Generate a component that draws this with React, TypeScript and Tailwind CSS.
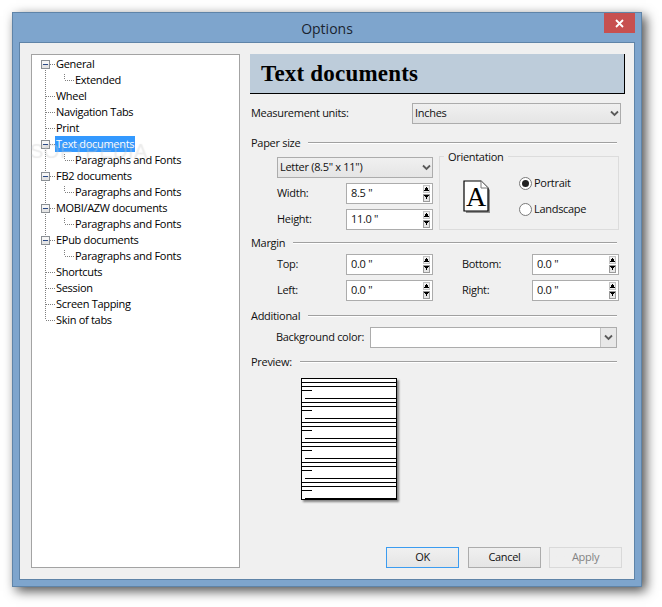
import React from "react";

type Kind = "exp" | "leaf" | "child" | "last";
const rows: { t: string; k: Kind; sel?: boolean }[] = [
  { t: "General", k: "exp" },
  { t: "Extended", k: "child" },
  { t: "Wheel", k: "leaf" },
  { t: "Navigation Tabs", k: "leaf" },
  { t: "Print", k: "leaf" },
  { t: "Text documents", k: "exp", sel: true },
  { t: "Paragraphs and Fonts", k: "child" },
  { t: "FB2 documents", k: "exp" },
  { t: "Paragraphs and Fonts", k: "child" },
  { t: "MOBI/AZW documents", k: "exp" },
  { t: "Paragraphs and Fonts", k: "child" },
  { t: "EPub documents", k: "exp" },
  { t: "Paragraphs and Fonts", k: "child" },
  { t: "Shortcuts", k: "leaf" },
  { t: "Session", k: "leaf" },
  { t: "Screen Tapping", k: "leaf" },
  { t: "Skin of tabs", k: "last" },
];

function Guide({ k, first }: { k: Kind; first: boolean }) {
  const w = k === "child" ? 42 : 23;
  const dot = { stroke: "#7f7f7f", strokeDasharray: "1 1", shapeRendering: "crispEdges" as const };
  return (
    <svg width={w} height={16} className="shrink-0">
      {!first && <line x1={13.5} y1={0} x2={13.5} y2={k === "last" ? 8 : 16} {...dot} />}
      {first && <line x1={13.5} y1={8} x2={13.5} y2={16} {...dot} />}
      {k !== "child" && <line x1={14} y1={8.5} x2={23} y2={8.5} {...dot} />}
      {k === "child" && (
        <>
          <line x1={32.5} y1={2} x2={32.5} y2={8} {...dot} />
          <line x1={33} y1={8.5} x2={42} y2={8.5} {...dot} />
        </>
      )}
      {k === "exp" && (
        <g shapeRendering="crispEdges">
          <rect x={9.5} y={4.5} width={8} height={8} fill="#e4e4e4" stroke="#8a8f94" />
          <rect x={10} y={5} width={7} height={3} fill="#f6f6f6" />
          <line x1={11} y1={8.5} x2={16} y2={8.5} stroke="#2b4a86" />
        </g>
      )}
    </svg>
  );
}

function Tree() {
  return (
    <div className="w-[209px] h-[514px] bg-white border border-[#a3a3a3] pt-px shrink-0">
      {rows.map((r, i) => (
        <div key={i} className="flex h-4 items-center text-black">
          <Guide k={r.k} first={i === 0} />
          <span className={r.sel ? "px-px h-4 leading-4 bg-[#3399ff] text-white" : "px-px h-4 leading-4"}>{r.t}</span>
        </div>
      ))}
    </div>
  );
}

function Chevron() {
  return (
    <svg width={9} height={7} viewBox="0 0 9 7" className="shrink-0">
      <path d="M1 1.5 L4.5 5 L8 1.5" fill="none" stroke="#5a5a5a" strokeWidth={1.8} />
    </svg>
  );
}

function Select({ text, cls }: { text: string; cls: string }) {
  return (
    <div className={"flex items-center justify-between border border-[#acacac] bg-gradient-to-b from-[#f0f0f0] to-[#e5e5e5] pl-[2px] pr-[1px] " + cls}>
      <span>{text}</span>
      <Chevron />
    </div>
  );
}

function Spin({ value }: { value: string }) {
  return (
    <div className="w-[87px] h-[21px] shrink-0 flex items-center justify-between bg-white border border-[#acacac] pl-[4px] pr-[2px]">
      <span>{value}</span>
      <svg width={7} height={17} viewBox="0 0 7 17" shapeRendering="crispEdges">
        <rect x={0.5} y={0.5} width={6} height={7} fill="#f0f0f0" stroke="#c4c4c4" />
        <path d="M3.5 2 L6 5.5 L1 5.5 Z" fill="#000" />
        <rect x={0.5} y={9.5} width={6} height={7} fill="#e6e6e6" stroke="#9a9a9a" />
        <path d="M1 10 H6 L3.5 14 Z" fill="#000" />
      </svg>
    </div>
  );
}

function Section({ label, cls = "" }: { label: string; cls?: string }) {
  return (
    <div className={"flex items-center h-4 pl-px pr-[8px] " + cls}>
      <span>{label}</span>
      <div className="flex-1 ml-[8px] border-t border-[#a0a0a0] border-b-white border-b h-[2px]" />
    </div>
  );
}

function Radio({ on, label }: { on?: boolean; label: string }) {
  return (
    <div className="flex items-center h-[14px]">
      <div className="w-[13px] h-[13px] rounded-full border border-[#7a7a7a] bg-white flex items-center justify-center shrink-0">
        {on && <div className="w-[7px] h-[7px] rounded-full bg-[#222]" />}
      </div>
      <span className="ml-[2px]">{label}</span>
    </div>
  );
}

function DocIcon() {
  return (
    <svg width={28} height={33} viewBox="0 0 28 33" className="shrink-0">
      <path d="M3 3 H20 L27 10 V33 H3 Z" fill="#8f8f8f" />
      <path d="M1 1 H18 L25 8 V31 H1 Z" fill="#fff" stroke="#000" strokeWidth={1.2} />
      <path d="M18 1 V8 H25" fill="#fff" stroke="#777" strokeWidth={1} />
      <text x={13} y={26} textAnchor="middle" fontSize={28} fontWeight={400} fill="#000" fontFamily="'Liberation Serif', serif">A</text>
    </svg>
  );
}

function Orientation() {
  return (
    <div className="relative ml-[6px] w-[180px] h-[74px] border border-[#dcdcdc] flex items-start pl-[23px] pt-[23px]">
      <span className="absolute left-[4px] -top-[8px] px-[4px] leading-4 bg-[#f0f0f0]">Orientation</span>
      <DocIcon />
      <div className="ml-[28px] -mt-[4px] flex flex-col gap-[12px]">
        <Radio on label="Portrait" />
        <Radio label="Landscape" />
      </div>
    </div>
  );
}

function Field({ label, value, w = "w-[69px]" }: { label: string; value: string; w?: string }) {
  return (
    <div className="flex items-center h-[21px]">
      <span className={"shrink-0 " + w}>{label}</span>
      <Spin value={value} />
    </div>
  );
}

function PreviewPage() {
  const marks: ("f" | "s" | "l")[] = [];
  for (let i = 0; i < 6; i++) marks.push("f", "f", "s", "l");
  return (
    <div className="ml-[51px] mt-[8px] w-[96px] h-[122px] bg-white border border-black shadow-[2px_2px_2px_rgba(0,0,0,0.45)] flex flex-col pt-[3px]">
      {marks.map((m, i) => (
        <div
          key={i}
          className={
            m === "f"
              ? "h-px bg-black mb-[3px] w-full shrink-0"
              : m === "s"
              ? "h-px bg-black mb-[7px] w-[10px] shrink-0"
              : "h-px bg-black mb-[3px] ml-[3px] w-[91px] shrink-0"
          }
        />
      ))}
    </div>
  );
}

function Btn({ label, cls }: { label: string; cls: string }) {
  return (
    <div className={"w-[73px] h-[21px] flex items-center justify-center border bg-gradient-to-b " + cls}>{label}</div>
  );
}

function Right() {
  return (
    <div className="w-[375px] shrink-0 flex flex-col">
      <div className="h-[40px] bg-[#bdccda] border-r border-b border-black pl-[11px] pt-[1px] flex items-center font-['Liberation_Serif',serif] font-bold text-[23px] tracking-[0.2px] text-black">
        Text documents
      </div>
      <div className="mt-[9px] flex items-center h-[21px]">
        <span className="w-[162px] pl-px shrink-0">Measurement units:</span>
        <Select text="Inches" cls="w-[209px] h-[21px]" />
      </div>
      <Section label="Paper size" cls="mt-[11px]" />
      <div className="mt-[5px] flex h-[74px]">
        <div className="pl-[27px] w-[183px] shrink-0 flex flex-col pt-px gap-[5px]">
          <Select text="Letter (8.5&quot; x 11&quot;)" cls="w-[156px] h-[21px]" />
          <Field label="Width:" value='8.5 "' />
          <Field label="Height:" value='11.0 "' />
        </div>
        <Orientation />
      </div>
      <Section label="Margin" cls="mt-[5px]" />
      <div className="mt-[3px] pl-[27px] flex flex-col gap-[5px]">
        <div className="flex">
          <Field label="Top:" value='0.0 "' />
          <div className="ml-[29px]"><Field label="Bottom:" value='0.0 "' w="w-[70px]" /></div>
        </div>
        <div className="flex">
          <Field label="Left:" value='0.0 "' />
          <div className="ml-[29px]"><Field label="Right:" value='0.0 "' w="w-[70px]" /></div>
        </div>
      </div>
      <Section label="Additional" cls="mt-[7px]" />
      <div className="mt-[3px] flex items-center h-[21px]">
        <span className="w-[120px] pl-[26px] shrink-0 whitespace-nowrap">Background color:</span>
        <div className="w-[247px] h-[21px] bg-white border border-[#acacac] flex justify-end">
          <div className="w-[16px] h-full bg-[#e8e8e8] border-l border-[#c4c4c4] flex items-center justify-center">
            <Chevron />
          </div>
        </div>
      </div>
      <Section label="Preview:" cls="mt-[6px]" />
      <PreviewPage />
      <div className="mt-[47px] ml-[136px] flex">
        <Btn label="OK" cls="border-[#3c9cf0] from-[#f0f0f0] to-[#e5e5e5]" />
        <Btn label="Cancel" cls="ml-[9px] border-[#acacac] from-[#f0f0f0] to-[#e5e5e5]" />
        <Btn label="Apply" cls="ml-[8px] border-[#d9d9d9] from-[#efefef] to-[#efefef] text-[#838383]" />
      </div>
    </div>
  );
}

export default function App() {
  return (
    <div className="w-[662px] h-[607px] bg-white overflow-hidden pt-[12px] pl-[12px] relative font-['Open_Sans',sans-serif] text-[11px] tracking-[-0.3px] text-[#111]">
      <div className="w-[630px] h-[575px] bg-[#7ea5cd] border border-[#5f84a8] shadow-[4px_4px_11px_rgba(0,0,0,0.7)] flex flex-col">
        <div className="h-[29px] relative flex items-center justify-center shrink-0">
          <span className="text-[14px] tracking-normal text-[#1a2430] mt-[1px]">Options</span>
          <div className="absolute right-[6px] top-0 w-[31px] h-[20px] bg-[#c75050] flex items-center justify-center">
            <svg width={9} height={9} viewBox="0 0 9 9">
              <path d="M1 1 L8 8 M8 1 L1 8" stroke="#fff" strokeWidth={1.8} />
            </svg>
          </div>
        </div>
        <div className="ml-[6px] w-[616px] h-[538px] bg-[#f0f0f0] border border-[#5f84a8] pl-[11px] pt-[11px] flex gap-[10px]">
          <Tree />
          <Right />
        </div>
      </div>
      <div className="absolute left-[30px] top-[139px] pointer-events-none select-none text-[20px] leading-[24px] tracking-[0.5px] font-['Liberation_Sans',sans-serif] text-[#ffffff]/20 [text-shadow:0_0_1px_rgba(120,120,120,0.18)]">
        SOFTPEDIA
      </div>
    </div>
  );
}
